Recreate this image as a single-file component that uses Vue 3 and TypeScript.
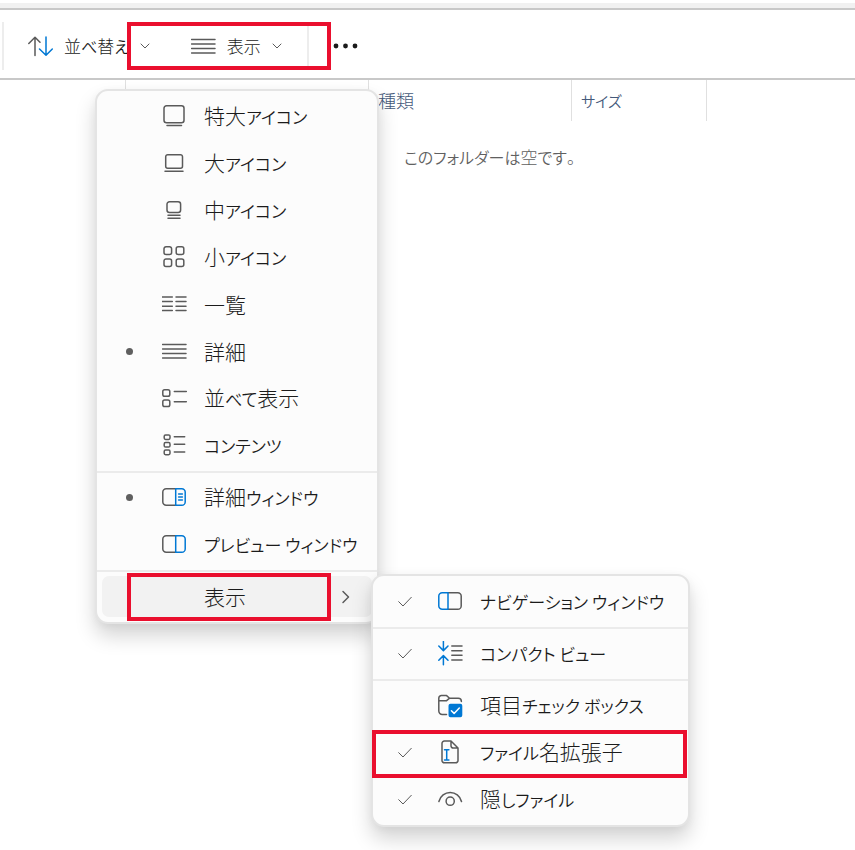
<script setup lang="ts">
import { h, ref, type FunctionalComponent } from 'vue'

interface Stroke {
  d: string
  tone?: 'blue' | 'fill' | 'white'
}

interface Entry {
  label: string
  icon: Stroke[]
  mark?: boolean
  divided?: boolean
  outlined?: boolean
}

// Sets kana runs a step smaller than the kanji around them.
const Label: FunctionalComponent<{ text: string }> = ({ text }) =>
  h(
    'span',
    { class: 'label' },
    text
      .split(/([\u3040-\u30ff ]+)/)
      .filter(Boolean)
      .map((run) => (/^[\u3040-\u30ff ]/.test(run) ? h('span', { class: 'kana' }, run) : run)),
  )
Label.props = ['text']

function box(x: number, y: number, w: number, hgt: number, r: number): string {
  return `M${x + r} ${y}h${w - 2 * r}a${r} ${r} 0 0 1 ${r} ${r}v${hgt - 2 * r}a${r} ${r} 0 0 1 -${r} ${r}h-${w - 2 * r}a${r} ${r} 0 0 1 -${r} -${r}v-${hgt - 2 * r}a${r} ${r} 0 0 1 ${r} -${r}z`
}

const lines: Stroke[] = [{ d: 'M.5 5.5h23.5M.5 10h23.5M.5 14.5h23.5M.5 19h23.5' }]

const sortIcon: Stroke[] = [
  { d: 'M7 21.5V3.5M.8 9.5L7 3.3l5 5' },
  { d: 'M18 3v18M11.5 15l6.5 6.3 6.3-6.3', tone: 'blue' },
]

const viewItems = ref<Entry[]>([
  { label: '特大アイコン', icon: [{ d: box(2, 1.7, 20, 17, 2.5) + 'M5 21.6h14.5' }] },
  { label: '大アイコン', icon: [{ d: box(3.7, 3.7, 16.8, 13.6, 2) + 'M3 20.2h18' }] },
  { label: '中アイコン', icon: [{ d: box(5, 3.7, 13.6, 10.8, 2.5) + 'M6 17.2h12M6 20.2h12' }] },
  {
    label: '小アイコン',
    icon: [{ d: box(2, 1.8, 7.6, 7.6, 2) + box(14.2, 1.8, 7.6, 7.6, 2) + box(2, 14, 7.6, 7.6, 2) + box(14.2, 14, 7.6, 7.6, 2) }],
  },
  { label: '一覧', icon: [{ d: 'M.3 5h10M14 5h10M.3 9.5h10M14 9.5h10M.3 14.2h10M14 14.2h10M.3 18.6h10M14 18.6h10' }] },
  { label: '詳細', icon: lines, mark: true },
  { label: '並べて表示', icon: [{ d: box(0.8, 3.7, 7, 6.6, 1.8) + box(0.8, 13.9, 7, 6.6, 1.8) + 'M12.3 5.4h12M12.3 15.7h12' }] },
  {
    label: 'コンテンツ',
    icon: [{ d: box(2.2, 1.9, 5.8, 4.6, 1.4) + box(2.2, 9.5, 5.8, 4.6, 1.4) + box(2.2, 17.1, 5.8, 4.6, 1.4) + 'M12.3 3.8h10.4M12.3 11.3h10.4M12.3 19h10.4' }],
  },
  {
    label: '詳細ウィンドウ',
    mark: true,
    divided: true,
    icon: [
      { d: 'M13.5 3.7H4.2a3.4 3.4 0 0 0-3.4 3.4v9.8a3.4 3.4 0 0 0 3.4 3.4h9.3' },
      { d: 'M13.7 3.7h6.1a3.4 3.4 0 0 1 3.4 3.4v9.8a3.4 3.4 0 0 1-3.4 3.4h-6.1zM16.6 9h3.8M16.6 12h3.8M16.6 15h3.8', tone: 'blue' },
    ],
  },
  {
    label: 'プレビュー ウィンドウ',
    icon: [
      { d: 'M13.5 3.7H4.2a3.4 3.4 0 0 0-3.4 3.4v9.8a3.4 3.4 0 0 0 3.4 3.4h9.3' },
      { d: 'M13.7 3.7h6.1a3.4 3.4 0 0 1 3.4 3.4v9.8a3.4 3.4 0 0 1-3.4 3.4h-6.1z', tone: 'blue' },
    ],
  },
])

const showItems = ref<Entry[]>([
  {
    label: 'ナビゲーション ウィンドウ',
    mark: true,
    icon: [
      { d: 'M10.3 3.7h9.5a3.4 3.4 0 0 1 3.4 3.4v9.8a3.4 3.4 0 0 1-3.4 3.4h-9.5' },
      { d: 'M10 3.7H4.2a3.4 3.4 0 0 0-3.4 3.4v9.8a3.4 3.4 0 0 0 3.4 3.4H10z', tone: 'blue' },
    ],
  },
  {
    label: 'コンパクト ビュー',
    mark: true,
    divided: true,
    icon: [
      { d: 'M5.4.3v9M.8 5l4.6 4.6L10 5M5.4 23.8v-9M.8 19.2l4.6-4.6 4.6 4.6', tone: 'blue' },
      { d: 'M13.8 5h10.2M13.8 9.7h10.2M13.8 14.3h10.2M13.8 19h10.2' },
    ],
  },
  {
    label: '項目チェック ボックス',
    divided: true,
    icon: [
      { d: 'M8.5 21.5H4.2a3.4 3.4 0 0 1-3.4-3.4V5.2a2.6 2.6 0 0 1 2.6-2.6h5.2l3 2.6h8.6a3.2 3.2 0 0 1 3.2 3.2M.8 7.7h7.8l3-2.5' },
      { d: box(10.5, 10.8, 13.8, 13.4, 2), tone: 'fill' },
      { d: 'M13.4 17.7l2.7 2.7 5.2-5.4', tone: 'white' },
    ],
  },
  {
    label: 'ファイル名拡張子',
    mark: true,
    outlined: true,
    icon: [
      { d: 'M13 1H6.4A2.4 2.4 0 0 0 4 3.4v17a2.4 2.4 0 0 0 2.4 2.4h11.2a2.4 2.4 0 0 0 2.4-2.4V8zM13 1v4.8A2.2 2.2 0 0 0 15.2 8H20' },
      { d: 'M6.5 9.7h4.4M6.5 20h4.4M8.7 9.7V20', tone: 'blue' },
    ],
  },
  {
    label: '隠しファイル',
    mark: true,
    icon: [{ d: 'M.9 14.5C2.3 8.8 7 5.5 12.2 5.5s9.900 3.300 11.300 9M16.300 14.200a4.100 4.100 0 1 1-8.200 0a4.100 4.100 0 1 1 8.200 0z' }],
  },
])

const columns = ['', '', '種類', 'サイズ']
</script>

<template>
  <div class="explorer">
    <div class="strip"></div>
    <header class="toolbar">
      <button type="button" class="tool sort">
        <svg class="icon" viewBox="0 0 25 25" aria-hidden="true">
          <path v-for="(s, i) in sortIcon" :key="i" :d="s.d" :class="s.tone" />
        </svg>
        <Label text="並べ替え" />
        <svg class="down" viewBox="0 0 10 10" aria-hidden="true"><path d="M1 3l4 4 4-4" /></svg>
      </button>
      <button type="button" class="tool view" aria-haspopup="menu" aria-expanded="true">
        <svg class="icon" viewBox="0 0 25 25" aria-hidden="true">
          <path v-for="(s, i) in lines" :key="i" :d="s.d" />
        </svg>
        <Label text="表示" />
        <svg class="down" viewBox="0 0 10 10" aria-hidden="true"><path d="M1 3l4 4 4-4" /></svg>
      </button>
      <button type="button" class="more" aria-label="その他">
        <svg viewBox="0 0 26 6" aria-hidden="true">
          <circle cx="3" cy="3" r="2.4" /><circle cx="12.5" cy="3" r="2.4" /><circle cx="22" cy="3" r="2.4" />
        </svg>
      </button>
      <div class="outline outline-toolbar"></div>
    </header>

    <main>
      <table class="columns">
        <thead>
          <tr>
            <th v-for="(c, i) in columns" :key="i" scope="col"><Label :text="c" /></th>
          </tr>
        </thead>
      </table>
      <p class="empty"><Label text="このフォルダーは空です。" /></p>
    </main>

    <ul class="menu main-menu" role="menu">
      <li v-for="item in viewItems" :key="item.label" :class="{ divided: item.divided }" role="none">
        <button type="button" class="entry" role="menuitemradio" :aria-checked="!!item.mark">
          <span class="mark"><i v-if="item.mark" class="bullet"></i></span>
          <svg class="icon" viewBox="0 0 25 25" aria-hidden="true">
            <path v-for="(s, i) in item.icon" :key="i" :d="s.d" :class="s.tone" />
          </svg>
          <Label :text="item.label" />
        </button>
      </li>
      <li class="divided" role="none">
        <button type="button" class="entry active" role="menuitem" aria-haspopup="menu" aria-expanded="true">
          <Label text="表示" />
          <svg class="right" viewBox="0 0 12 14" aria-hidden="true"><path d="M3 1.5L8.5 7 3 12.5" /></svg>
        </button>
        <div class="outline outline-parent"></div>

        <ul class="menu sub-menu" role="menu">
          <li v-for="item in showItems" :key="item.label" :class="{ divided: item.divided }" role="none">
            <button type="button" class="entry" role="menuitemcheckbox" :aria-checked="!!item.mark">
              <span class="mark">
                <svg v-if="item.mark" class="check" viewBox="0 0 16 12" aria-hidden="true"><path d="M1.7 5.7L6 10 14.3 1.3" /></svg>
              </span>
              <svg class="icon" viewBox="0 0 25 25" aria-hidden="true">
                <path v-for="(s, i) in item.icon" :key="i" :d="s.d" :class="s.tone" />
              </svg>
              <Label :text="item.label" />
            </button>
            <div v-if="item.outlined" class="outline outline-item"></div>
          </li>
        </ul>
      </li>
    </ul>
  </div>
</template>

<style>
body {
  margin: 0;
  background: #fff;
}
</style>

<style scoped>
.explorer {
  --kana: 17px;
  position: relative;
  min-height: 100vh;
  overflow: hidden;
  background: #fff;
  color: #1b1b1b;
  font-family: 'Noto Sans CJK JP', sans-serif;
  font-weight: 300;
  font-feature-settings: 'palt';
  font-size: 21px;
  line-height: 24px;
}

.explorer :deep(.kana) {
  font-size: var(--kana);
  font-weight: 350;
}

button {
  border: 0;
  padding: 0;
  background: none;
  color: inherit;
  font: inherit;
  font-feature-settings: inherit;
  text-align: left;
  white-space: nowrap;
}

svg {
  display: block;
  flex: none;
  fill: none;
  stroke: #5a5a5a;
  stroke-width: 1.5;
  stroke-linecap: round;
  stroke-linejoin: round;
}

.icon {
  width: 25px;
  height: 25px;
}

.blue {
  stroke: #0078d4;
}

.fill {
  fill: #0078d4;
  stroke: none;
}

.white {
  stroke: #fff;
}

.strip {
  height: 5px;
  border-top: 3px solid #fff;
  border-bottom: 2px solid #c8c8c8;
  background: #f1f1f1;
}

.toolbar {
  --kana: 16px;
  position: relative;
  display: flex;
  align-items: stretch;
  height: 48px;
  padding: 12px 0 8px 2px;
  border-bottom: 2px solid #c8c8c8;
}

.tool {
  display: flex;
  align-items: center;
  gap: 11px;
  font-size: 17px;
}

.sort {
  padding-left: 24px;
  border-left: 2px solid #ededed;
}

.view {
  padding: 0 25px 0 41px;
  border-right: 2px solid #ededed;
}

.down {
  width: 10px;
  height: 10px;
}

.down path {
  stroke-width: 1;
}

.more {
  padding: 0 24px;
}

.more svg {
  width: 26px;
  height: 6px;
  fill: #1b1b1b;
  stroke: none;
}

.outline {
  position: absolute;
  box-sizing: border-box;
  border: 4px solid #ea0f2e;
  pointer-events: none;
}

.outline-toolbar {
  top: 12px;
  bottom: 8px;
  left: 127px;
  width: 204px;
}

.columns {
  --kana: 15px;
  border-collapse: separate;
  border-spacing: 0;
  table-layout: fixed;
  width: 707px;
}

.columns th {
  box-sizing: border-box;
  height: 41px;
  padding: 0 9px 2px;
  border-right: 1px solid #e0e0e0;
  color: #44597a;
  font-size: 18px;
  font-weight: inherit;
  text-align: left;
}

.columns th:nth-child(1) {
  width: 126px;
}

.columns th:nth-child(2) {
  width: 243px;
}

.columns th:nth-child(3) {
  width: 203px;
}

.empty {
  --kana: 16px;
  margin: 24px 0 0;
  padding-left: 404px;
  color: #606060;
  font-size: 17px;
}

.menu {
  position: absolute;
  box-sizing: border-box;
  margin: 0;
  padding: 2px 0;
  border: 2px solid #e4e4e4;
  border-radius: 13px;
  background: #fcfcfc;
  box-shadow: 0 12px 20px rgba(0, 0, 0, 0.17), 0 2px 8px rgba(0, 0, 0, 0.04);
  list-style: none;
}

.main-menu {
  top: 89px;
  left: 95px;
  width: 284px;
}

.sub-menu {
  top: 6px;
  left: 274px;
  width: 319px;
  z-index: 1;
}

.menu li {
  position: relative;
  padding: 3px 5px;
}

.menu li.divided {
  padding-top: 8px;
}

.divided::before {
  position: absolute;
  top: 2px;
  right: 0;
  left: 0;
  height: 2px;
  background: #ebebeb;
  content: '';
}

.entry {
  display: grid;
  grid-template-columns: 60px 42px 1fr;
  align-items: center;
  width: 100%;
  height: 41px;
  border-radius: 7px;
}

.entry .label {
  padding-bottom: 2px;
}

.mark {
  display: flex;
  justify-content: center;
  width: 54px;
}

.bullet {
  width: 7px;
  height: 7px;
  border-radius: 50%;
  background: #5f5f5f;
}

.check {
  width: 16px;
  height: 12px;
}

.check path {
  stroke-width: 1;
}

.entry.active {
  grid-template-columns: 1fr auto;
  padding: 0 20px 0 102px;
  background: #f2f2f2;
}

.right {
  width: 12px;
  height: 14px;
}

.outline-parent {
  top: 5px;
  bottom: -1px;
  left: 30px;
  width: 204px;
}

.outline-item {
  top: 1px;
  right: 1px;
  bottom: -2px;
  left: -1px;
  z-index: 1;
}
</style>
